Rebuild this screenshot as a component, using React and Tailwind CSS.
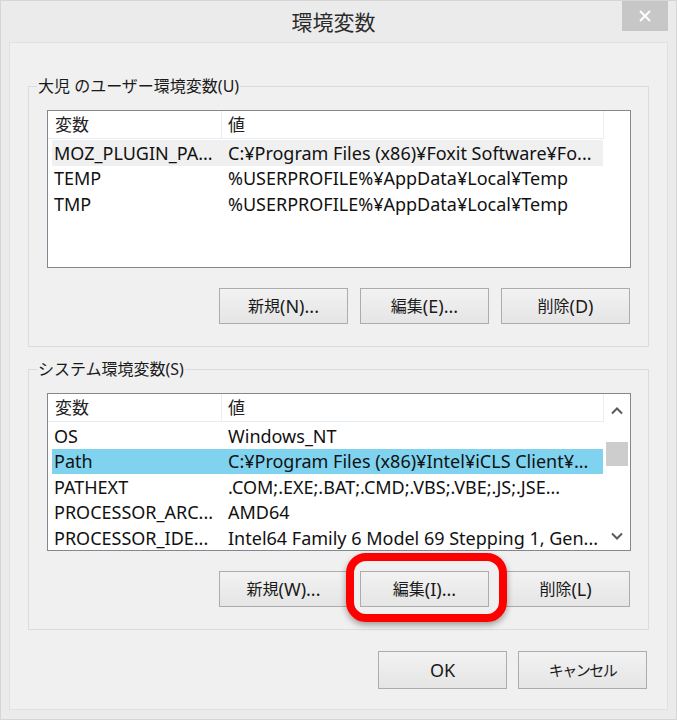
const font = "font-['Noto_Sans','Noto_Sans_CJK_JP',sans-serif]";

function J({ children, className = "" }) {
  return <span className={`text-[16px] ${className}`}>{children}</span>;
}

function WinButton({ children, className = "" }) {
  return (
    <div
      className={`flex h-[36px] w-[129px] items-center justify-center border border-[#acacac] bg-gradient-to-b from-[#f2f2f2] to-[#e5e5e5] text-[18px] leading-[24px] text-[#1a1a1a] ${className}`}
    >
      {children}
    </div>
  );
}

function Chevron({ down }) {
  return (
    <svg width="12" height="8" viewBox="0 0 12 8" className="block">
      <polyline
        points={down ? "1,1.5 6,6.5 11,1.5" : "1,6.5 6,1.5 11,6.5"}
        fill="none"
        stroke="#5a5a5a"
        strokeWidth="2"
      />
    </svg>
  );
}

function ListView({ rows, scroll }) {
  return (
    <div className="ml-[18px] flex h-[158px] w-[584px] border border-[#828790] bg-white">
      <div className="w-[556px] flex-none">
        <div className="flex h-[28px] w-[556px] border-b border-[#e5ecf3] text-[17px] text-[#222]">
          <div className="flex w-[174px] items-center border-r border-[#e8eef4] pl-[7px]">
            変数
          </div>
          <div className="flex flex-1 items-center border-r border-[#e8eef4] pl-[6px]">
            値
          </div>
        </div>
        <div className="pl-[4px] pt-[1px]">
          {rows.map((r) => (
            <div
              key={r.name}
              className={`flex h-[25.5px] w-[551px] items-center text-[18px] leading-[24px] text-[#111] ${
                r.sel === "gray" ? "bg-[#f0f0f0]" : r.sel === "blue" ? "bg-[#7fd3ef]" : ""
              }`}
            >
              <div className="w-[174px] flex-none truncate pl-[2px]">{r.name}</div>
              <div className="truncate pl-[2px]">{r.value}</div>
            </div>
          ))}
        </div>
      </div>
      {scroll && (
        <div className="flex flex-1 flex-col items-center bg-white">
          <div className="mt-[13px]">
            <Chevron />
          </div>
          <div className="mt-[27px] h-[24px] w-[22px] bg-[#cdcdcd]" />
          <div className="mt-auto mb-[10px]">
            <Chevron down />
          </div>
        </div>
      )}
    </div>
  );
}

function Group({ label, rows, scroll, buttons, className = "" }) {
  return (
    <fieldset
      className={`ml-[18px] w-[621px] border border-[#dcdcdc] pt-[14px] pb-[22px] ${className}`}
    >
      <legend className="ml-[8px] px-[1px] text-[16px] leading-[20px] text-[#1a1a1a]">
        {label}
      </legend>
      <ListView rows={rows} scroll={scroll} />
      <div className="mt-[20px] flex justify-end gap-[12px] pr-[18px]">{buttons}</div>
    </fieldset>
  );
}

export default function App() {
  const userRows = [
    {
      name: "MOZ_PLUGIN_PA...",
      value: "C:¥Program Files (x86)¥Foxit Software¥Fo...",
      sel: "gray",
    },
    { name: "TEMP", value: "%USERPROFILE%¥AppData¥Local¥Temp" },
    { name: "TMP", value: "%USERPROFILE%¥AppData¥Local¥Temp" },
  ];
  const sysRows = [
    { name: "OS", value: "Windows_NT" },
    {
      name: "Path",
      value: "C:¥Program Files (x86)¥Intel¥iCLS Client¥...",
      sel: "blue",
    },
    { name: "PATHEXT", value: ".COM;.EXE;.BAT;.CMD;.VBS;.VBE;.JS;.JSE..." },
    { name: "PROCESSOR_ARC...", value: "AMD64" },
    {
      name: "PROCESSOR_IDE...",
      value: "Intel64 Family 6 Model 69 Stepping 1, Gen...",
    },
  ];

  return (
    <div
      className={`flex h-[720px] w-[677px] flex-col border border-[#d6d6d6] bg-[#ebebeb] ${font}`}
    >
      {/* title bar */}
      <div className="flex h-[41px] flex-none items-start">
        <div className="flex-1 pt-[6px] pl-[44px] text-center text-[21px] leading-[30px] text-[#2b2b2b]">
          環境変数
        </div>
        <div className="mr-[8px] flex h-[30px] w-[46px] items-center justify-center bg-[#c7c7c7]">
          <svg width="12" height="12" viewBox="0 0 12 12">
            <path d="M1 1 L11 11 M11 1 L1 11" stroke="#fff" strokeWidth="2" />
          </svg>
        </div>
      </div>

      {/* client area */}
      <div className="mx-[8px] mb-[9px] flex-1 border border-[#e1e1e1] bg-[#f0f0f0]">
        <Group
          className="mt-[33px]"
          label="大児 のユーザー環境変数(U)"
          rows={userRows}
          buttons={
            <>
              <WinButton><J>新規</J>(N)...</WinButton>
              <WinButton><J>編集</J>(E)...</WinButton>
              <WinButton><J>削除</J>(D)</WinButton>
            </>
          }
        />
        <Group
          className="mt-[12px]"
          label="システム環境変数(S)"
          rows={sysRows}
          scroll
          buttons={
            <>
              <WinButton><J>新規</J>(W)...</WinButton>
              <div className="relative">
                <WinButton><J>編集</J>(I)...</WinButton>
                <div className="absolute -left-[14px] -top-[18px] h-[69px] w-[161px] rounded-[20px] border-[8px] border-[#ff0000] shadow-[0_3px_6px_rgba(0,0,0,0.35)]" />
              </div>
              <WinButton><J>削除</J>(L)</WinButton>
            </>
          }
        />
        <div className="mt-[21px] flex justify-end gap-[11px] pr-[20px]">
          <WinButton className="h-[38px]">OK</WinButton>
          <WinButton className="h-[38px]">
            <J className="!text-[15px] tracking-[-1.5px]">キャンセル</J>
          </WinButton>
        </div>
      </div>
    </div>
  );
}
